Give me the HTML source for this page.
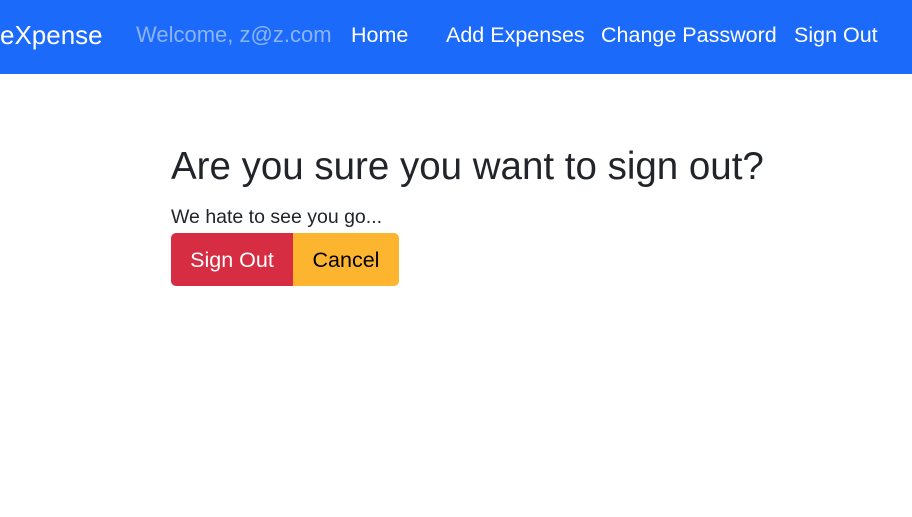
<!DOCTYPE html>
<html><head><style>
body{margin:0;background:#fff;font-family:"Liberation Sans",sans-serif;width:912px;height:517px;overflow:hidden;position:relative}
.nav{position:absolute;left:0;top:0;width:912px;height:74px;background:#1b6afa}
.nav span{position:absolute;top:21px;font-size:21.5px;color:#fff;white-space:nowrap;line-height:28px}
h1{position:absolute;left:171px;top:144px;margin:0;font-size:38.5px;font-weight:normal;color:#212529;line-height:46px;letter-spacing:0}
p{position:absolute;left:171px;top:205px;margin:0;font-size:19.5px;color:#212529;line-height:24px}
.b{position:absolute;top:233px;height:53px;font-size:21.5px;line-height:55px;text-align:center}
</style></head><body>
<div class="nav">
<span style="left:0;font-size:26px;top:20px;line-height:30px">eXpense</span>
<span style="left:136px;color:#8cb4fb;font-size:22px">Welcome, z@z.com</span>
<span style="left:351px">Home</span>
<span style="left:446px">Add Expenses</span>
<span style="left:601px">Change Password</span>
<span style="left:794px">Sign Out</span>
</div>
<h1>Are you sure you want to sign out?</h1>
<p>We hate to see you go...</p>
<div class="b" style="left:171px;width:122px;background:#d72d42;color:#fff;border-radius:5px 0 0 5px">Sign Out</div>
<div class="b" style="left:293px;width:106px;background:#fdb52f;color:#000;border-radius:0 5px 5px 0">Cancel</div>
</body></html>
